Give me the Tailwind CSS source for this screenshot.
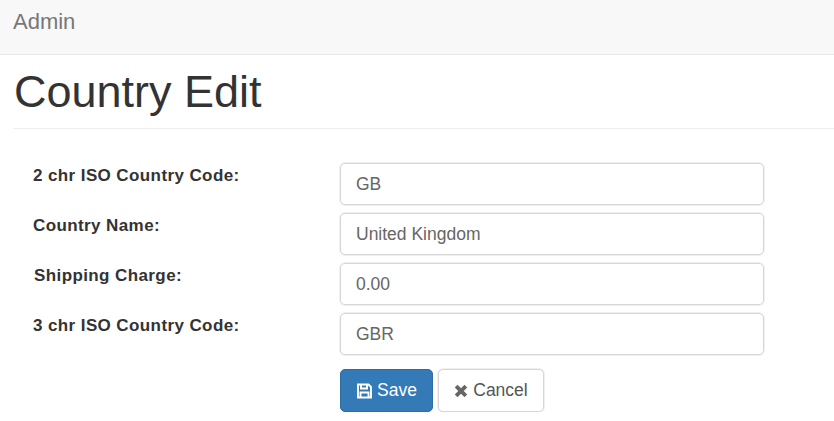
<!DOCTYPE html>
<html lang="en">

<head>
    <meta charset="UTF-8">
    <title>Country Edit</title>
    <script src="https://cdn.jsdelivr.net/npm/@tailwindcss/browser@4"></script>
</head>

<body class="bg-white text-[#333] font-['Liberation_Sans',Arial,sans-serif] overflow-hidden">
    <nav class="h-[55px] bg-[#f8f8f8] border-b border-[#e7e7e7] pl-[13px] pt-[10px]">
        <a href="#" class="text-[22px] leading-[24px] text-[#777]">Admin</a>
    </nav>

    <main class="pl-[13px]">
        <div class="border-b border-[#eee] h-[74px] pl-[1px] pt-[10px]">
            <h1 class="text-[45px] leading-[54px] font-normal">Country Edit</h1>
        </div>

        <form class="mt-[34px] flex flex-col gap-2">
            <div class="flex">
                <label class="w-[327px] pl-[20px] pt-[2px] text-[17px] leading-[22px] font-bold tracking-[0.4px]">2 chr ISO Country Code:</label>
                <input type="text" value="GB" class="w-[424px] h-[42px] px-[15px] border border-[#d6d6d6] rounded-[5px] text-[17.5px] text-[#666] shadow-[0_0_0_1px_#f0f0f0]">
            </div>
            <div class="flex">
                <label class="w-[327px] pl-[20px] pt-[2px] text-[17px] leading-[22px] font-bold tracking-[0.4px]">Country Name:</label>
                <input type="text" value="United Kingdom" class="w-[424px] h-[42px] px-[15px] border border-[#d6d6d6] rounded-[5px] text-[17.5px] text-[#666] shadow-[0_0_0_1px_#f0f0f0]">
            </div>
            <div class="flex">
                <label class="w-[327px] pl-[21px] pt-[2px] text-[17px] leading-[22px] font-bold tracking-[0.4px]">Shipping Charge:</label>
                <input type="text" value="0.00" class="w-[424px] h-[42px] px-[15px] border border-[#d6d6d6] rounded-[5px] text-[17.5px] text-[#666] shadow-[0_0_0_1px_#f0f0f0]">
            </div>
            <div class="flex">
                <label class="w-[327px] pl-[20px] pt-[2px] text-[17px] leading-[22px] font-bold tracking-[0.4px]">3 chr ISO Country Code:</label>
                <input type="text" value="GBR" class="w-[424px] h-[42px] px-[15px] border border-[#d6d6d6] rounded-[5px] text-[17.5px] text-[#666] shadow-[0_0_0_1px_#f0f0f0]">
            </div>
            <div class="flex gap-[5px] ml-[327px] mt-[6px]">
                <button type="button" class="w-[93px] h-[43px] flex items-center justify-center gap-[4px] bg-[#337ab7] border border-[#2e6da4] rounded-[5px] text-white text-[17.5px]">
                    <svg width="17" height="16" viewBox="0 0 16 16" fill="none" stroke="currentColor" stroke-width="1.9"><path d="M1.5 1.5h10.5l2.5 2.5v10.5h-13z"/><path d="M4.5 1.5v4h6v-4M4 14.5v-5h8v5"/></svg>
                    Save
                </button>
                <button type="button" class="w-[106px] h-[43px] flex items-center justify-center gap-[5px] bg-white border border-[#d6d6d6] rounded-[5px] text-[#555] text-[17.5px] shadow-[0_0_0_1px_#f0f0f0]">
                    <svg width="14" height="14" viewBox="0 0 13 13" fill="none" stroke="#666" stroke-width="3.6"><path d="M2 2l9 9M11 2l-9 9"/></svg>
                    Cancel
                </button>
            </div>
        </form>
    </main>
</body>

</html>
